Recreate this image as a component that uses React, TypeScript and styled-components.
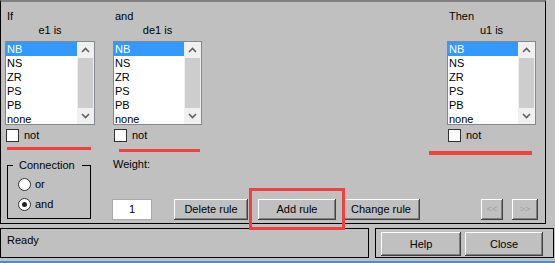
import styled, { createGlobalStyle } from "styled-components";

const items = ["NB", "NS", "ZR", "PS", "PB", "none"];

const GlobalStyle = createGlobalStyle`
  html, body {
    margin: 0;
    padding: 0;
    background: #c0c0c0;
  }
  body {
    font-family: "Liberation Sans", Arial, sans-serif;
    font-size: 11px;
    color: #000;
  }
`;

const Window = styled.div`
  width: 555px;
  height: 263px;
  overflow: hidden;
  background: #c0c0c0;
  display: flex;
  flex-direction: column;
`;

const MainPanel = styled.div`
  position: relative;
  box-sizing: border-box;
  width: 546px;
  height: 224px;
  border-top: 2px solid #808080;
  border-left: 1px solid #000;
  border-right: 1px solid #000;
  border-bottom: 1px solid #000;
  padding: 7px 0 0 4px;
  display: flex;
  flex-direction: column;
`;

const TopRow = styled.div`
  display: flex;
  align-items: flex-start;
  padding-right: 9px;
`;

const Column = styled.div<{ $width: number; $ml?: number; $auto?: boolean }>`
  position: relative;
  flex-shrink: 0;
  width: ${(p) => p.$width}px;
  margin-left: ${(p) => (p.$auto ? "auto" : `${p.$ml ?? 0}px`)};
  display: flex;
  flex-direction: column;
`;

const Heading = styled.div`
  height: 14px;
  line-height: 14px;
  padding-left: 2px;
`;

const SubHeading = styled.div`
  height: 14px;
  line-height: 14px;
  text-align: center;
`;

const ListBox = styled.div`
  margin-top: 4px;
  height: 84px;
  box-sizing: border-box;
  border: 1px solid #828790;
  background: #fff;
  display: flex;
  overflow: hidden;
`;

const Items = styled.div`
  flex: 1;
`;

const Item = styled.div<{ $selected?: boolean }>`
  height: 14px;
  line-height: 14px;
  padding-left: 1px;
  background: ${(p) => (p.$selected ? "#3399ff" : "transparent")};
  color: ${(p) => (p.$selected ? "#fff" : "#000")};
`;

const ScrollBar = styled.div`
  width: 17px;
  background: #f0f0f0;
  display: flex;
  flex-direction: column;
`;

const ArrowButton = styled.div`
  height: 16px;
  display: flex;
  align-items: center;
  justify-content: center;
`;

const Thumb = styled.div`
  flex: 1;
  margin: 0 1px;
  background: #cdcdcd;
`;

const CheckRow = styled.label`
  margin-top: 3px;
  height: 14px;
  display: flex;
  align-items: center;
  gap: 5px;
  padding-left: 1px;
`;

const CheckBox = styled.span`
  width: 13px;
  height: 13px;
  box-sizing: border-box;
  border: 1px solid #333;
  background: #fff;
`;

const RedMark = styled.div<{ $top: number; $left: number; $width: number; $h?: number }>`
  position: absolute;
  top: ${(p) => p.$top}px;
  left: ${(p) => p.$left}px;
  width: ${(p) => p.$width}px;
  height: ${(p) => p.$h ?? 3}px;
  background: #f23f3f;
`;

const BottomRow = styled.div`
  margin-top: 15px;
  display: flex;
  align-items: flex-start;
`;

const GroupBox = styled.div`
  position: relative;
  flex-shrink: 0;
  margin: 8px 0 0 2px;
  width: 84px;
  height: 54px;
  box-sizing: border-box;
  border: 1px solid #000;
  padding: 8px 0 0 10px;
`;

const GroupTitle = styled.span`
  position: absolute;
  top: -8px;
  left: 5px;
  padding: 0 7px 0 6px;
  line-height: 14px;
  background: #c0c0c0;
`;

const RadioRow = styled.div`
  height: 20px;
  display: flex;
  align-items: center;
  gap: 4px;
`;

const Radio = styled.span<{ $checked?: boolean }>`
  width: 13px;
  height: 13px;
  box-sizing: border-box;
  border-radius: 50%;
  border: 1px solid #333;
  background: #fff;
  display: flex;
  align-items: center;
  justify-content: center;
  &::after {
    content: "";
    width: 5px;
    height: 5px;
    border-radius: 50%;
    background: ${(p) => (p.$checked ? "#222" : "transparent")};
  }
`;

const RuleArea = styled.div`
  margin-left: 21px;
  flex-shrink: 0;
  display: flex;
  flex-direction: column;
`;

const WeightLabel = styled.div`
  height: 14px;
  line-height: 14px;
  padding-left: 1px;
`;

const ButtonRow = styled.div`
  margin-top: 28px;
  display: flex;
  align-items: center;
`;

const WeightInput = styled.div`
  flex-shrink: 0;
  width: 40px;
  height: 21px;
  box-sizing: border-box;
  border: 1px solid #a9a9a9;
  background: #fff;
  line-height: 19px;
  text-align: center;
`;

const Button = styled.div<{ $width: number; $ml?: number; $height?: number; $disabled?: boolean }>`
  position: relative;
  flex-shrink: 0;
  width: ${(p) => p.$width}px;
  height: ${(p) => p.$height ?? 21}px;
  margin-left: ${(p) => p.$ml ?? 0}px;
  box-sizing: border-box;
  background: #c0c0c0;
  box-shadow: inset -1px -1px #404040, inset 1px 1px #fff, inset -2px -2px #808080;
  display: flex;
  align-items: center;
  justify-content: center;
  padding-bottom: 1px;
  color: ${(p) => (p.$disabled ? "#a0a0a0" : "#000")};
  font-size: ${(p) => (p.$disabled ? "9px" : "11px")};
`;

const Highlight = styled.div`
  position: absolute;
  top: -11px;
  left: -9px;
  width: 96px;
  height: 42px;
  box-sizing: border-box;
  border: 3px solid #f23f3f;
  z-index: 2;
`;

const BottomBar = styled.div`
  margin-top: 4px;
  display: flex;
`;

const StatusBox = styled.div`
  width: 369px;
  height: 30px;
  box-sizing: border-box;
  border: 1px solid #000;
  padding: 4px 0 0 6px;
  line-height: 14px;
`;

const ActionBox = styled.div`
  margin-left: 6px;
  width: 179px;
  height: 30px;
  box-sizing: border-box;
  border: 1px solid #000;
  padding: 3px 0 0 5px;
  display: flex;
  gap: 4px;
`;

const TaskLine = styled.div`
  margin-top: 3px;
  height: 2px;
  background: #3a8ee6;
`;

function Chevron({ up }: { up?: boolean }) {
  return (
    <svg width="9" height="6" viewBox="0 0 9 6">
      <path
        d={up ? "M1 5 L4.5 1.5 L8 5" : "M1 1 L4.5 4.5 L8 1"}
        fill="none"
        stroke="#606060"
        strokeWidth="1.6"
      />
    </svg>
  );
}

function VarList() {
  return (
    <ListBox>
      <Items>
        {items.map((it, i) => (
          <Item key={it} $selected={i === 0}>
            {it}
          </Item>
        ))}
      </Items>
      <ScrollBar>
        <ArrowButton>
          <Chevron up />
        </ArrowButton>
        <Thumb />
        <ArrowButton>
          <Chevron />
        </ArrowButton>
      </ScrollBar>
    </ListBox>
  );
}

function VarColumn(props: {
  head: string;
  sub: string;
  width: number;
  ml?: number;
  auto?: boolean;
  mark: { top: number; left: number; width: number; h?: number };
}) {
  return (
    <Column $width={props.width} $ml={props.ml} $auto={props.auto}>
      <Heading>{props.head}</Heading>
      <SubHeading>{props.sub}</SubHeading>
      <VarList />
      <CheckRow>
        <CheckBox />
        not
      </CheckRow>
      <RedMark
        $top={props.mark.top}
        $left={props.mark.left}
        $width={props.mark.width}
        $h={props.mark.h}
      />
    </Column>
  );
}

export default function App() {
  return (
    <>
      <GlobalStyle />
      <Window>
        <MainPanel>
          <TopRow>
            <VarColumn head="If" sub="e1 is" width={90} mark={{ top: 138, left: 2, width: 84 }} />
            <VarColumn head="and" sub="de1 is" width={89} ml={18} mark={{ top: 140, left: 6, width: 81 }} />
            <VarColumn head="Then" sub="u1 is" width={89} auto mark={{ top: 142, left: -18, width: 103, h: 4 }} />
          </TopRow>
          <BottomRow>
            <GroupBox>
              <GroupTitle>Connection</GroupTitle>
              <RadioRow>
                <Radio />
                or
              </RadioRow>
              <RadioRow>
                <Radio $checked />
                and
              </RadioRow>
            </GroupBox>
            <RuleArea>
              <WeightLabel>Weight:</WeightLabel>
              <ButtonRow>
                <WeightInput>1</WeightInput>
                <Button $width={74} $ml={22}>Delete rule</Button>
                <Button $width={78} $ml={10}>
                  Add rule
                  <Highlight />
                </Button>
                <Button $width={78} $ml={6}>Change rule</Button>
                <Button $width={22} $ml={61} $disabled>&lt;&lt;</Button>
                <Button $width={26} $ml={9} $disabled>&gt;&gt;</Button>
              </ButtonRow>
            </RuleArea>
          </BottomRow>
        </MainPanel>
        <BottomBar>
          <StatusBox>Ready</StatusBox>
          <ActionBox>
            <Button $width={80} $height={24}>Help</Button>
            <Button $width={78} $height={24}>Close</Button>
          </ActionBox>
        </BottomBar>
        <TaskLine />
      </Window>
    </>
  );
}
